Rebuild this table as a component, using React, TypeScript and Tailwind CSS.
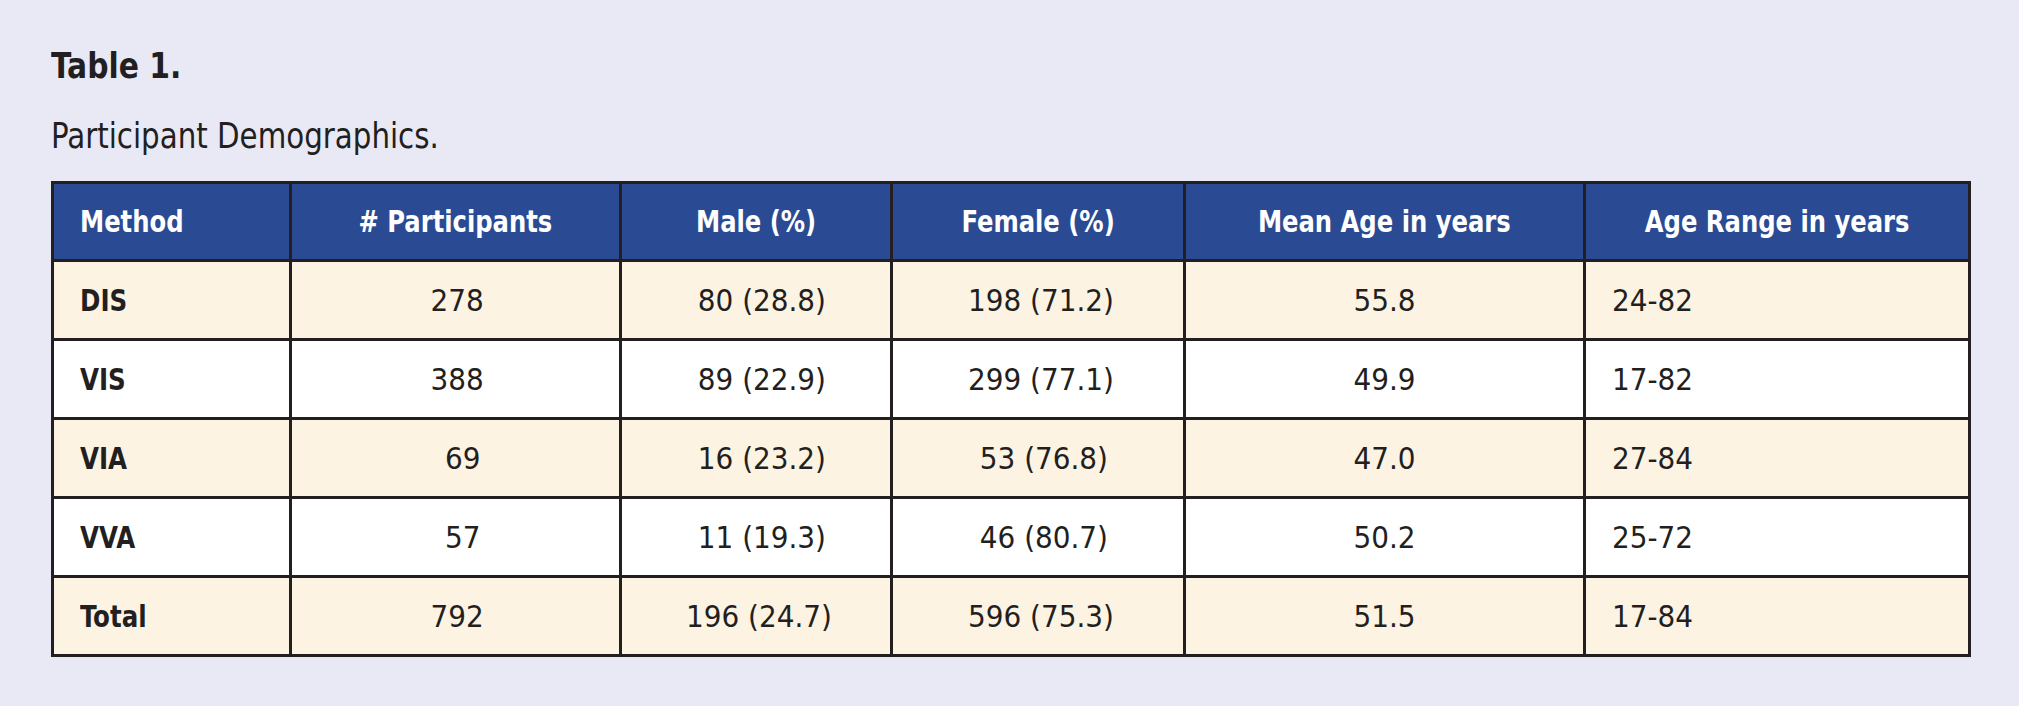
import React from "react";

const rows = [
  { m: "DIS", n: "278", male: "80 (28.8)", female: "198 (71.2)", mean: "55.8", range: "24-82", bg: "bg-[#fcf3e3]" },
  { m: "VIS", n: "388", male: "89 (22.9)", female: "299 (77.1)", mean: "49.9", range: "17-82", bg: "bg-white" },
  { m: "VIA", n: "69", male: "16 (23.2)", female: "53 (76.8)", mean: "47.0", range: "27-84", bg: "bg-[#fcf3e3]" },
  { m: "VVA", n: "57", male: "11 (19.3)", female: "46 (80.7)", mean: "50.2", range: "25-72", bg: "bg-white" },
  { m: "Total", n: "792", male: "196 (24.7)", female: "596 (75.3)", mean: "51.5", range: "17-84", bg: "bg-[#fcf3e3]" },
];

const font = { fontFamily: '"DejaVu Sans Condensed", "Liberation Sans Narrow", "Liberation Sans", sans-serif' };

function HeadCell({ children, left }: { children: React.ReactNode; left?: boolean }) {
  return (
    <th className={`border-[3px] border-[#231f20] font-bold whitespace-nowrap ${left ? "text-left pl-[26px]" : "text-center"}`}>
      <span className={`inline-block scale-x-[0.87] ${left ? "origin-left" : "origin-center"}`}>{children}</span>
    </th>
  );
}

function Num({ children, w }: { children: React.ReactNode; w: string }) {
  return <div className={`mx-auto text-right whitespace-nowrap ${w}`}>{children}</div>;
}

export default function App() {
  return (
    <div className="w-[2019px] h-[706px] bg-[#e9e9f5] pt-[44px] pl-[51px] text-[#231f20]" style={font}>
      <div className="text-[36px] font-bold leading-[44px]">
        <span className="inline-block scale-x-[0.92] origin-left">Table 1.</span>
      </div>
      <div className="text-[36px] leading-[44px] mt-[26px]">
        <span className="inline-block scale-x-[0.905] origin-left whitespace-nowrap">Participant Demographics.</span>
      </div>
      <table className="mt-[23px] border-collapse border-[3px] border-[#231f20] w-[1917px] table-fixed">
        <colgroup>
          <col className="w-[238px]" />
          <col className="w-[330px]" />
          <col className="w-[271px]" />
          <col className="w-[293px]" />
          <col className="w-[400px]" />
          <col className="w-[385px]" />
        </colgroup>
        <thead>
          <tr className="bg-[#2a4a93] text-white text-[31px] h-[78px]">
            <HeadCell left>Method</HeadCell>
            <HeadCell># Participants</HeadCell>
            <HeadCell>Male (%)</HeadCell>
            <HeadCell>Female (%)</HeadCell>
            <HeadCell>Mean Age in years</HeadCell>
            <HeadCell>Age Range in years</HeadCell>
          </tr>
        </thead>
        <tbody>
          {rows.map((r) => (
            <tr key={r.m} className={`${r.bg} text-[31px] h-[79px]`}>
              <td className="border-[3px] border-[#231f20] pl-[26px] font-bold whitespace-nowrap">
                <span className="inline-block scale-x-[0.88] origin-left">{r.m}</span>
              </td>
              <td className="border-[3px] border-[#231f20]">
                <Num w="w-[50px]">{r.n}</Num>
              </td>
              <td className="border-[3px] border-[#231f20]">
                <Num w="w-[140px]">{r.male}</Num>
              </td>
              <td className="border-[3px] border-[#231f20]">
                <Num w="w-[140px]">{r.female}</Num>
              </td>
              <td className="border-[3px] border-[#231f20] text-center">{r.mean}</td>
              <td className="border-[3px] border-[#231f20] pl-[26px]">{r.range}</td>
            </tr>
          ))}
        </tbody>
      </table>
    </div>
  );
}
